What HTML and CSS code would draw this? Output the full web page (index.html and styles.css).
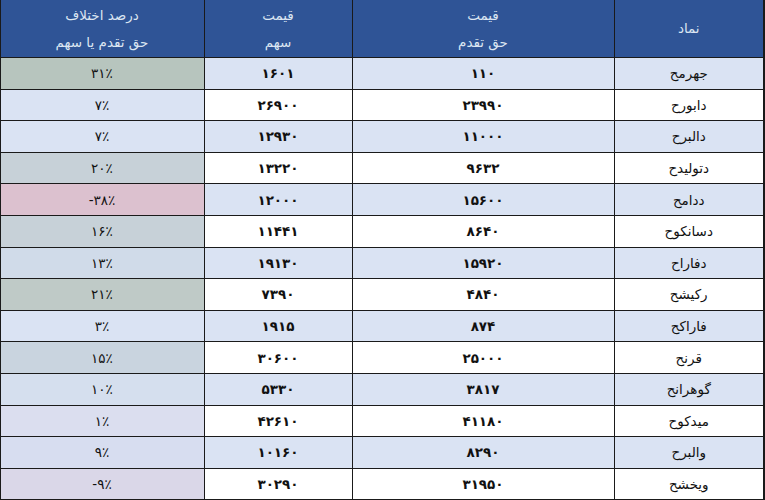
FILE: index.html
```html
<!DOCTYPE html>
<html lang="fa" dir="rtl">
<head>
<meta charset="utf-8">
<link rel="stylesheet" href="styles.css">
</head>
<body>
<table class="grid">
  <colgroup>
    <col class="c-name">
    <col class="c-haq">
    <col class="c-sahm">
    <col class="c-pct">
  </colgroup>
  <thead>
    <tr>
      <th>نماد</th>
      <th><span class="hl">قیمت</span><span class="hl">حق تقدم</span></th>
      <th><span class="hl">قیمت</span><span class="hl">سهم</span></th>
      <th><span class="hl">درصد اختلاف</span><span class="hl">حق تقدم یا سهم</span></th>
    </tr>
  </thead>
  <tbody>
    <tr class="alt"><td class="name">جهرمح</td><td class="num">۱۱۰</td><td class="num">۱۶۰۱</td><td class="pct p-green">۳۱٪</td></tr>
    <tr><td class="name">دابورح</td><td class="num">۲۳۹۹۰</td><td class="num">۲۶۹۰۰</td><td class="pct p-blue">۷٪</td></tr>
    <tr class="alt"><td class="name">دالبرح</td><td class="num">۱۱۰۰۰</td><td class="num">۱۲۹۳۰</td><td class="pct p-blue">۷٪</td></tr>
    <tr><td class="name">دتولیدح</td><td class="num">۹۶۳۲</td><td class="num">۱۳۲۲۰</td><td class="pct p-gray">۲۰٪</td></tr>
    <tr class="alt"><td class="name">ددامح</td><td class="num">۱۵۶۰۰</td><td class="num">۱۲۰۰۰</td><td class="pct p-pink">-۳۸٪</td></tr>
    <tr><td class="name">دسانکوح</td><td class="num">۸۶۴۰</td><td class="num">۱۱۴۴۱</td><td class="pct p-gray">۱۶٪</td></tr>
    <tr class="alt"><td class="name">دفاراح</td><td class="num">۱۵۹۲۰</td><td class="num">۱۹۱۳۰</td><td class="pct p-mid">۱۳٪</td></tr>
    <tr><td class="name">رکیشح</td><td class="num">۴۸۴۰</td><td class="num">۷۳۹۰</td><td class="pct p-sage">۲۱٪</td></tr>
    <tr class="alt"><td class="name">فاراکح</td><td class="num">۸۷۴</td><td class="num">۱۹۱۵</td><td class="pct p-blue">۳٪</td></tr>
    <tr><td class="name">قرنح</td><td class="num">۲۵۰۰۰</td><td class="num">۳۰۶۰۰</td><td class="pct p-steel">۱۵٪</td></tr>
    <tr class="alt"><td class="name">گوهرانح</td><td class="num">۳۸۱۷</td><td class="num">۵۳۳۰</td><td class="pct p-light">۱۰٪</td></tr>
    <tr><td class="name">میدکوح</td><td class="num">۴۱۱۸۰</td><td class="num">۴۲۶۱۰</td><td class="pct p-lav">۱٪</td></tr>
    <tr class="alt"><td class="name">والبرح</td><td class="num">۸۲۹۰</td><td class="num">۱۰۱۶۰</td><td class="pct p-lav2">۹٪</td></tr>
    <tr><td class="name">ویخشح</td><td class="num">۳۱۹۵۰</td><td class="num">۳۰۲۹۰</td><td class="pct p-lav3">-۹٪</td></tr>
  </tbody>
</table>
</body>
</html>
```

FILE: styles.css
```css
html, body {
  margin: 0;
  padding: 0;
  background: #ffffff;
}

body {
  font-family: "DejaVu Sans", "Noto Sans", sans-serif;
  overflow: hidden;
}

.grid {
  width: 764px;
  border-collapse: collapse;
  table-layout: fixed;
  direction: rtl;
}

.c-name { width: 150px; }
.c-haq { width: 262px; }
.c-sahm { width: 148px; }
.c-pct { width: 204px; }

.grid th {
  background: #2f5496;
  color: #dce6f2;
  font-weight: normal;
  font-size: 13.5px;
  height: 57px;
  padding: 0;
  text-align: center;
  border: 1.5px solid #1a1a1a;
  border-top: 0;
  line-height: 1;
}

.grid th:first-child {
  border-right: 2px solid #1a1a1a;
}

.hl {
  display: block;
  line-height: 27px;
}

.grid td {
  height: 30.6px;
  padding: 0;
  text-align: center;
  border: 1.5px solid #1a1a1a;
  font-size: 13.5px;
  color: #111;
}

.grid td:first-child {
  border-right: 2px solid #1a1a1a;
}

.grid tr.alt td {
  background: #dae3f3;
}

.name {
  font-size: 14.5px;
}

.num {
  font-weight: bold;
  direction: ltr;
  letter-spacing: 0.5px;
}

.pct {
  direction: ltr;
  font-size: 12.5px;
}

.grid tr td.p-green { background: #b7c5be; }
.grid tr td.p-blue { background: #dae3f3; }
.grid tr td.p-gray { background: #c7d1d8; }
.grid tr td.p-pink { background: #dcc1cf; }
.grid tr td.p-mid { background: #d0dbe9; }
.grid tr td.p-sage { background: #bfcac7; }
.grid tr td.p-steel { background: #c9d4df; }
.grid tr td.p-light { background: #d5dfee; }
.grid tr td.p-lav { background: #dbdeef; }
.grid tr td.p-lav2 { background: #d7ddf0; }
.grid tr td.p-lav3 { background: #dad7e8; }
```
